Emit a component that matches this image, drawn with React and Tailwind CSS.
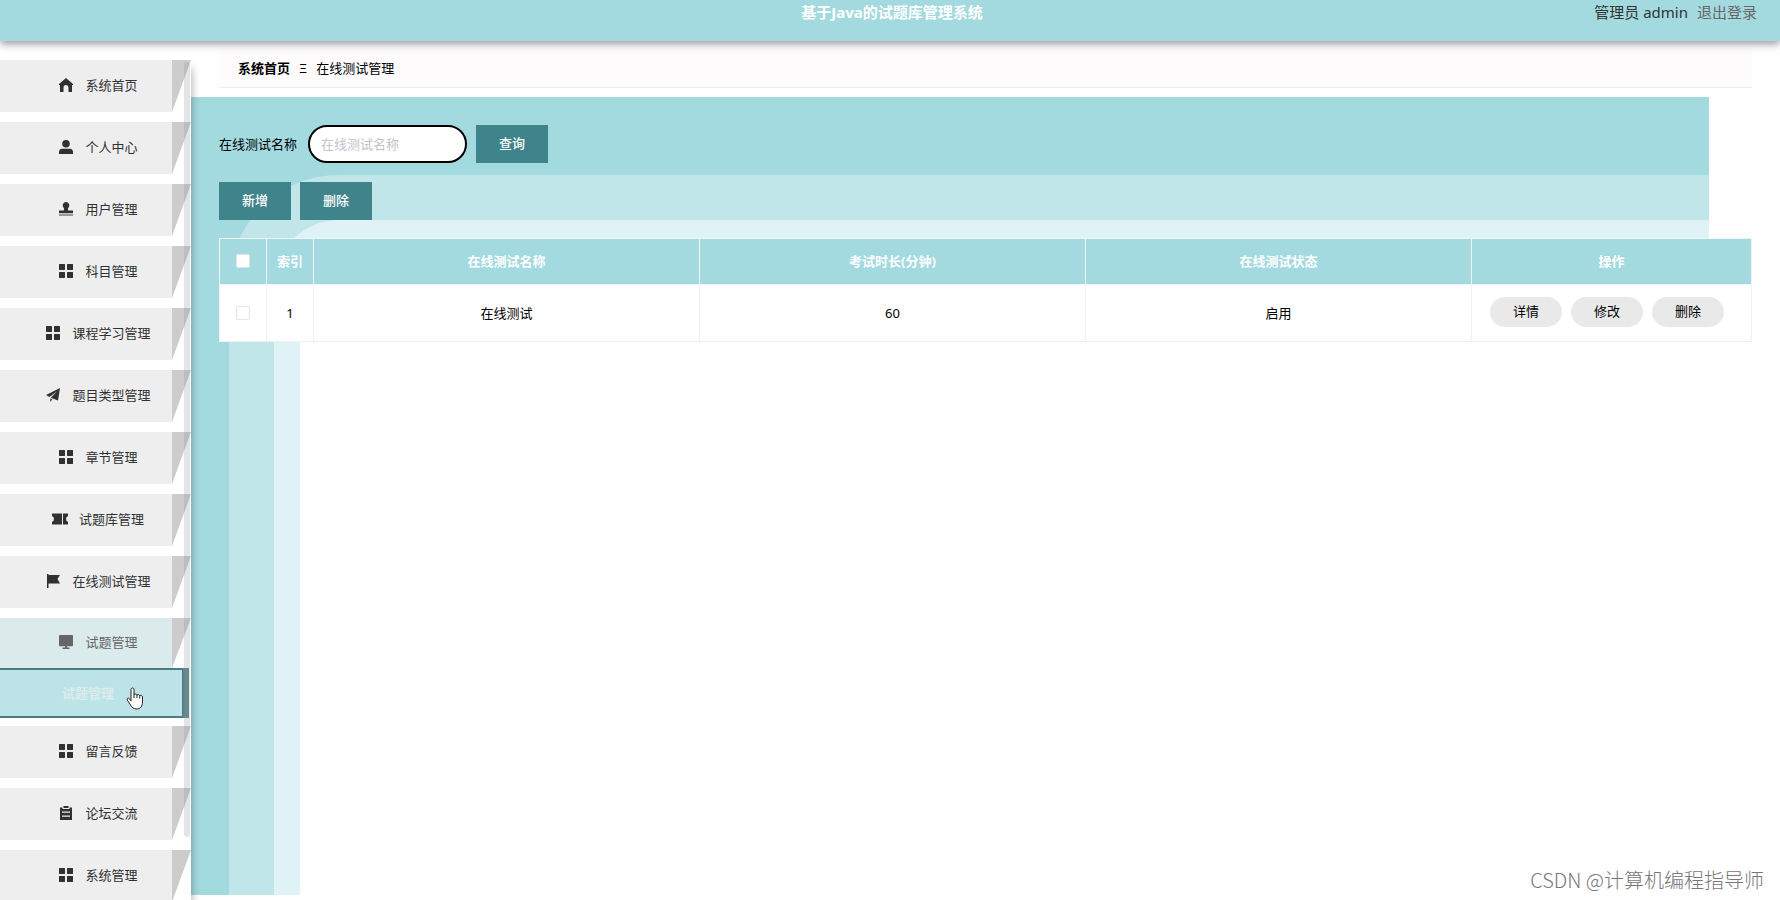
const MENU_ICONS = {
  home: <path d="M7 0 0 6v1h1v7h3.500V9.500a2.500 2.500 0 0 1 5 0V14H13V7h1V6z" />,
  user: <path d="M7 0a3.800 3.800 0 1 1 0 7.600A3.800 3.800 0 0 1 7 0zM3 8.800h8c2 0 3 1.500 3 3.200v2H0v-2c0-1.700 1-3.200 3-3.200z" />,
  stamp: (
    <>
      <path d="M7 0a3.400 3.400 0 0 1 2.400 5.700c-.6.700-.6 1.500-.2 2.800H14v2.500H0V8.500h4.800c.4-1.300.4-2.100-.2-2.800A3.400 3.400 0 0 1 7 0z" />
      <path d="M0 11.500h14V14H0z" opacity=".45" />
    </>
  ),
  grid: <path d="M.5 0h5c.3 0 .5.200.5.500v5c0 .3-.2.500-.5.500h-5C.2 6 0 5.800 0 5.500v-5C0 .2.200 0 .5 0zM8.500 0h5c.3 0 .5.200.5.500v5c0 .3-.2.500-.5.500h-5c-.3 0-.5-.2-.5-.5v-5c0-.3.200-.5.500-.5zM.5 8h5c.3 0 .5.200.5.500v5c0 .3-.2.500-.5.500h-5c-.3 0-.5-.2-.5-.5v-5c0-.3.200-.5.500-.5zM8.500 8h5c.3 0 .5.200.5.500v5c0 .3-.2.500-.5.500h-5c-.3 0-.5-.2-.5-.5v-5c0-.3.200-.5.500-.5z" />,
  plane: <path d="M14 0 0 7l3.500 2L11 3.300 4.800 9.800l7.200 2.700zM4.300 10.500V14l2-2.700z" />,
  ticket: <path d="M-1 1.500H9v11H-1V10L.8 8.500v-3L-1 4zM10 1.500h5V4l-1.800 1.500v3L15 10v2.500h-5z" />,
  flag: <path d="M1 0h1.500v1H14l-2.500 4L14 9.500H2.500V14H1z" />,
  monitor: <path d="M.8 0h12.400c.5 0 .8.300.8.800v9.700c0 .5-.3.800-.8.800H.8c-.5 0-.8-.3-.8-.8V.8C0 .3.300 0 .8 0zM6 11.300h2v1.200h2.500V14h-7v-1.500H6z" />,
  clipboard: <path fillRule="evenodd" d="M1 1.500h2.500V3h7V1.500H13V14H1zM4.500 0h5v2h-5zM3 5.500v1.200h8V5.500zM3 9.500v1.200h8V9.500z" />,
}

const MENU = [
  { label: '系统首页', icon: 'home' },
  { label: '个人中心', icon: 'user' },
  { label: '用户管理', icon: 'stamp' },
  { label: '科目管理', icon: 'grid' },
  { label: '课程学习管理', icon: 'grid' },
  { label: '题目类型管理', icon: 'plane' },
  { label: '章节管理', icon: 'grid' },
  { label: '试题库管理', icon: 'ticket' },
  { label: '在线测试管理', icon: 'flag' },
  { label: '试题管理', icon: 'monitor', children: ['试题管理'] },
  { label: '留言反馈', icon: 'grid' },
  { label: '论坛交流', icon: 'clipboard' },
  { label: '系统管理', icon: 'grid' },
]

const ROWS = [{ id: 1, name: '在线测试', minutes: 60, status: '启用' }]

function MenuItem({ label, icon, open }) {
  return (
    <button type="button" className={`flex w-full shrink-0 ${open ? 'h-[50px] text-[#666]' : 'h-[52px] text-[#303133]'}`}>
      <span className={`flex h-full flex-1 items-center justify-center gap-3 pb-[2px] pl-[25px] ${open ? 'bg-[#dbeaeb]' : 'bg-[#eee]'}`}>
        <svg viewBox="0 0 14 14" className="size-[14px] overflow-visible fill-current" aria-hidden="true">
          {MENU_ICONS[icon]}
        </svg>
        {label}
      </span>
      <span className="h-full w-[19px] bg-[#cdcbcb] [clip-path:polygon(0_0,100%_0,0_100%)]" />
    </button>
  )
}

function Sidebar() {
  return (
    <aside className="relative z-10 mt-[19px] flex w-[191px] shrink-0 flex-col bg-white shadow-[1px_8px_8px_rgba(0,0,0,0.3)]">
      <nav className="flex h-0 grow flex-col gap-[10px] overflow-hidden text-[13px]">
        {MENU.map(item => (
          <div key={item.label} className={item.children ? '-mb-[2px] shrink-0' : 'shrink-0'}>
            <MenuItem label={item.label} icon={item.icon} open={Boolean(item.children)} />
            {item.children?.map(child => (
              <a key={child} href="#" className="flex h-[50px] pr-[2px]">
                <span className="flex flex-1 items-center border border-y-2 border-l-0 border-[#4d7c80] bg-[#bce4e8] pl-[62px] font-bold text-[#dcebed]">
                  {child}
                </span>
                <span className="w-[6px] bg-[#5d858b]" />
              </a>
            ))}
          </div>
        ))}
      </nav>
      {/* scrollbar thumb */}
      <span className="absolute top-[2px] right-[1px] h-[775px] w-[6px] rounded-full bg-[#909399]/25" />
      <svg viewBox="0 0 18 23" className="absolute top-[627px] left-[126px] h-[23px] w-[18px]" aria-hidden="true">
        <path
          d="M5 14V2.500C5 .5 8 .5 8 2.500V8c0-1.500 3-1.500 3 .5 0-1.500 2.700-1.200 2.700.7 0-1.300 2.800-1.200 2.800.8v5c0 4-2 7-5.500 7S6 20.500 4.500 18L1.300 13c-.8-1.800 1-2.500 2.200-1.200z"
          fill="#fff"
          stroke="#222"
        />
        <path d="M8 8v3M11 8.500V11M13.700 9.200V11.500" stroke="#222" />
      </svg>
    </aside>
  )
}

function ActionButton({ children }) {
  return (
    <button type="button" className="h-[38px] w-[72px] bg-[#40848b] pb-[2px] text-[13px] font-medium text-white">
      {children}
    </button>
  )
}

function CheckBox({ label }) {
  return (
    <input
      type="checkbox"
      aria-label={label}
      className="mx-auto block size-[14px] appearance-none rounded-[2px] border border-[#e4e4e4] bg-white"
    />
  )
}

function TestTable() {
  const th = 'border border-[#eff5f6] p-0 pb-px font-bold'
  const td = 'border border-[#f0f0f3] p-0 pb-px'
  return (
    <table className="w-full table-fixed border-collapse bg-white text-center text-[13px]">
      <colgroup>
        <col className="w-[47px]" />
        <col className="w-[47px]" />
        <col />
        <col />
        <col />
        <col className="w-[280px]" />
      </colgroup>
      <thead className="bg-[#a3dadf] text-white">
        <tr className="h-[46px]">
          <th className={th}><CheckBox label="全选" /></th>
          <th className={th}>索引</th>
          <th className={th}>在线测试名称</th>
          <th className={th}>考试时长(分钟)</th>
          <th className={th}>在线测试状态</th>
          <th className={th}>操作</th>
        </tr>
      </thead>
      <tbody className="text-black">
        {ROWS.map(row => (
          <tr key={row.id} className="h-[57px]">
            <td className={td}><CheckBox label={row.name} /></td>
            <td className={td}>{row.id}</td>
            <td className={td}>{row.name}</td>
            <td className={td}>{row.minutes}</td>
            <td className={td}>{row.status}</td>
            <td className={td}>
              <div className="flex gap-[9px] pb-[2px] pl-[18px]">
                {['详情', '修改', '删除'].map(action => (
                  <button key={action} type="button" className="h-[30px] w-[72px] rounded-full bg-[#e9e9e9] pb-px">
                    {action}
                  </button>
                ))}
              </div>
            </td>
          </tr>
        ))}
      </tbody>
    </table>
  )
}

// nested rounded bands behind the page content
function Backdrop() {
  return (
    <div className="col-start-1 row-start-1 mr-[71px] flex bg-[#a3dadf] pt-[78px] pl-[38px]">
      <div className="flex flex-1 rounded-tl-[110px] bg-[#c0e6ea] pt-[45px] pl-[45px]">
        <div className="flex flex-1 rounded-tl-[65px] bg-[#dff3f6] pt-[26px] pl-[26px]">
          <div className="flex-1 rounded-tl-[39px] bg-white" />
        </div>
      </div>
    </div>
  )
}

export default function App() {
  return (
    <div className="flex h-screen flex-col overflow-hidden bg-white font-['Noto_Sans','Noto_Sans_CJK_SC',sans-serif] leading-5">
      <header className="relative z-20 grid h-[41px] shrink-0 grid-cols-[1fr_auto_1fr] bg-[#a3dadf] pt-[2px] text-[15px] shadow-[0_3px_8px_rgba(0,0,0,0.4)]">
        <h1 className="col-start-2 pl-1 font-bold text-white">基于Java的试题库管理系统</h1>
        <div className="flex justify-end gap-[9px] pr-[23px]">
          <span className="text-[#333]">管理员 admin</span>
          <a href="#" className="text-[#666]">退出登录</a>
        </div>
      </header>

      <div className="flex flex-1">
        <Sidebar />
        <main className="flex min-w-0 flex-1 flex-col pb-[5px]">
          <nav className="mt-2 mr-7 mb-[9px] ml-7 flex h-[39px] items-center gap-[9px] border-b border-[#f0eeef] bg-[#fdfbfc] pl-[19px] text-[13px] text-black">
            <a href="#" className="font-bold">系统首页</a>
            <span>Ξ</span>
            <span>在线测试管理</span>
          </nav>

          <div className="grid flex-1">
            <Backdrop />
            <div className="col-start-1 row-start-1 px-7 pt-7">
              <form className="flex items-center gap-[9px] text-[13px] text-black">
                <label htmlFor="test-name" className="w-20">在线测试名称</label>
                <input
                  id="test-name"
                  type="text"
                  placeholder="在线测试名称"
                  className="h-[38px] w-[159px] rounded-full border-2 border-black bg-white px-[11px] placeholder:text-[#c0c4cc]"
                />
                <ActionButton>查询</ActionButton>
              </form>
              <div className="mt-[19px] mb-[18px] flex gap-[9px]">
                <ActionButton>新增</ActionButton>
                <ActionButton>删除</ActionButton>
              </div>
              <TestTable />
            </div>
          </div>
        </main>
      </div>

      <p className="absolute right-4 bottom-2 font-['Noto_Sans_CJK_SC',sans-serif] text-[20px] leading-6 font-light text-[#777]">
        CSDN @计算机编程指导师
      </p>
    </div>
  )
}
